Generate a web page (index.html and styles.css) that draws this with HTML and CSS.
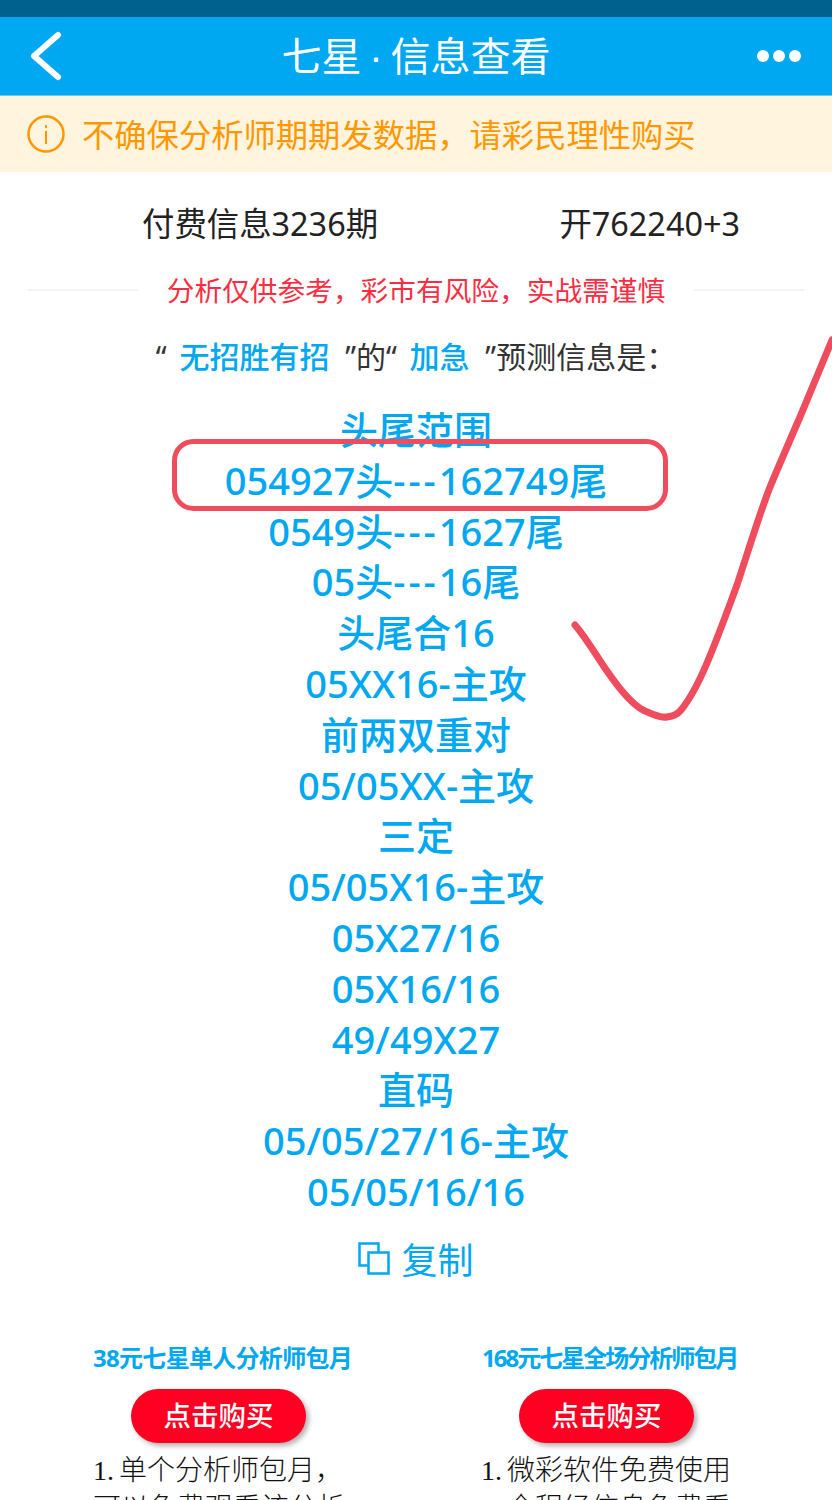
FILE: index.html
```html
<!DOCTYPE html>
<html lang="zh-CN">
<head>
    <meta charset="UTF-8">
    <meta name="viewport" content="width=device-width, initial-scale=1.0">
    <title>七星·信息查看</title>
    <link rel="stylesheet" href="styles.css">
</head>
<body>
    <div class="page">
        <div class="status-bar"></div>
        <header class="title-bar">
            <svg class="back-icon" width="36" height="52" viewBox="0 0 36 52">
                <path d="M32 5 L8 26 L32 47" fill="none" stroke="#fff" stroke-width="6" stroke-linecap="round" stroke-linejoin="round"/>
            </svg>
            <h1>七星<span class="title-dot">·</span>信息查看</h1>
            <div class="more-dots"><span></span><span></span><span></span></div>
        </header>
        <div class="notice">
            <svg width="38" height="38" viewBox="0 0 38 38">
                <circle cx="19" cy="19" r="17.500" fill="none" stroke="#ff9800" stroke-width="2.500"/>
                <rect x="18" y="10" width="2" height="3" fill="#ff9800"/>
                <rect x="18" y="16" width="2" height="13" fill="#ff9800"/>
            </svg>
            <span>不确保分析师期期发数据，请彩民理性购买</span>
        </div>
        <div class="issue-row">
            <span class="issue-name">付费信息3236期</span>
            <span class="issue-open">开762240+3</span>
        </div>
        <div class="warning">
            <i></i>
            <span>分析仅供参考，彩市有风险，实战需谨慎</span>
            <i></i>
        </div>
        <p class="forecast-title">“ <b>无招胜有招</b> ”的“ <b>加急</b> ”预测信息是<span class="colon">：</span></p>
        <div class="forecast">
            <div>头尾范围</div>
            <div>054927头<span class="dashes">---</span>162749尾</div>
            <div>0549头<span class="dashes">---</span>1627尾</div>
            <div>05头<span class="dashes">---</span>16尾</div>
            <div>头尾合16</div>
            <div>05XX16-主攻</div>
            <div>前两双重对</div>
            <div>05/05XX-主攻</div>
            <div>三定</div>
            <div>05/05X16-主攻</div>
            <div>05X27/16</div>
            <div>05X16/16</div>
            <div>49/49X27</div>
            <div>直码</div>
            <div>05/05/27/16-主攻</div>
            <div>05/05/16/16</div>
        </div>
        <div class="copy-row">
            <svg width="32" height="33" viewBox="0 0 32 33">
                <path d="M10 23.500 H1.500 V1.500 H20.500 V10" fill="none" stroke="#00a7f1" stroke-width="2.500"/>
                <rect x="10.500" y="10.500" width="20" height="21" fill="none" stroke="#00a7f1" stroke-width="2.500"/>
            </svg>
            <span>复制</span>
        </div>
        <div class="plans">
            <div class="plan">
                <h3>38元七星单人分析师包月</h3>
                <div class="buy-button">点击购买</div>
                <p>1. 单个分析师包月，<br>可以免费观看该分析</p>
            </div>
            <div class="plan plan-all">
                <h3>168元七星全场分析师包月</h3>
                <div class="buy-button">点击购买</div>
                <p>1. 微彩软件免费使用<br>2. 全程经信息免费看</p>
            </div>
        </div>

        <!-- red marks drawn over the screenshot -->
        <svg class="marks" width="832" height="1500" viewBox="0 0 832 1500">
            <rect x="174.500" y="441.500" width="491" height="67" rx="19" fill="none" stroke="#ef4d5e" stroke-width="5"/>
            <path d="M575 625 C587 639 597 657 607 671 C618 687 630 703 643 710 C652 714 660 718 667 717 C673 716 677 715 681 710 C690 699 699 682 707 663 C718 637 727 612 737 585 C748 552 758 518 770 487 C780 463 790 440 800 417 C811 391 821 366 832 340" fill="none" stroke="#ef4d5e" stroke-width="7" stroke-linecap="round"/>
        </svg>
    </div>
</body>
</html>
```
FILE: styles.css
```css
html, body {
    margin: 0;
    padding: 0;
    background: #fff;
}
body {
    font-family: "Noto Sans", "Noto Sans CJK SC", sans-serif;
}
.page {
    position: relative;
    width: 832px;
    height: 1500px;
    overflow: hidden;
    background: #fff;
}
.status-bar {
    height: 17px;
    background: #00618e;
}
.title-bar {
    height: 78px;
    background: #00a7f1;
    border-bottom: 1px solid #6cc9f5;
    display: flex;
    align-items: center;
    justify-content: space-between;
    padding: 0 31px 0 26px;
}
.title-bar h1 {
    margin: 0 0 0 13px;
    font-size: 40px;
    font-weight: 400;
    color: #fff;
    line-height: 1;
}
.title-dot {
    display: inline-block;
    width: 29px;
    text-align: center;
    font-family: "Liberation Sans", sans-serif;
}
.more-dots {
    display: flex;
    gap: 4px;
}
.more-dots span {
    width: 12px;
    height: 12px;
    border-radius: 50%;
    background: #fff;
}
.notice {
    height: 76px;
    background: #fff4de;
    display: flex;
    align-items: center;
    gap: 17px;
    padding-left: 27px;
    color: #ff9800;
    font-size: 32.300px;
    font-weight: 400;
}
.notice span {
    margin-bottom: 3px;
}
.issue-row {
    display: flex;
    justify-content: space-between;
    padding: 29px 92px 0 142px;
    height: 45px;
    font-size: 32.400px;
    line-height: 44px;
    font-weight: 400;
    color: #222;
}
.warning {
    display: flex;
    align-items: center;
    justify-content: space-between;
    padding: 0 28px;
    margin-top: 22px;
    height: 44px;
    color: #fc2d42;
    font-size: 27.700px;
    font-weight: 400;
}
.warning span {
    position: relative;
    top: -1px;
}
.warning i {
    width: 110px;
    height: 2px;
    background: #f3f3f3;
}
.forecast-title {
    margin: 23px 0 0;
    text-align: center;
    font-size: 30px;
    line-height: 40px;
    font-weight: 400;
    color: #333;
}
.forecast-title b {
    margin: 0 8px 0 5px;
    color: #00a7f1;
    font-weight: 500;
}
.colon {
    font-family: "Noto Sans CJK TC", sans-serif;
}
.forecast {
    margin-top: 27px;
    text-align: center;
    color: #00a7f1;
    font-size: 38px;
    line-height: 50.800px;
    font-weight: 500;
}
.dashes {
    letter-spacing: 3px;
}
.copy-row {
    display: flex;
    align-items: center;
    justify-content: center;
    gap: 11px;
    margin-top: 17px;
    height: 50px;
    color: #00a7f1;
    font-size: 36px;
    font-weight: 400;
}
.plans {
    display: flex;
    margin-top: 57px;
    padding-left: 93px;
}
.plan {
    width: 388px;
    flex-shrink: 0;
}
.plan h3 {
    margin: 0;
    font-size: 24px;
    line-height: 34px;
    font-weight: 700;
    color: #00a7f1;
    letter-spacing: -0.700px;
}
.plan-all h3 {
    margin-left: 1px;
    letter-spacing: -2px;
}
.buy-button {
    width: 175px;
    height: 54px;
    margin: 14px 0 0 38px;
    border-radius: 27px;
    background: #ff0022;
    color: #fff;
    font-size: 27.500px;
    font-weight: 500;
    line-height: 54px;
    text-align: center;
    box-shadow: 3px 3px 5px rgba(0,0,0,0.3);
}
.plan p {
    margin: 9px 0 0;
    font-family: "Liberation Serif", "Noto Sans CJK SC", serif;
    font-size: 28px;
    line-height: 38px;
    font-weight: 300;
    word-spacing: -2px;
    color: #111;
}
.marks {
    position: absolute;
    left: 0;
    top: 0;
    pointer-events: none;
}
```
